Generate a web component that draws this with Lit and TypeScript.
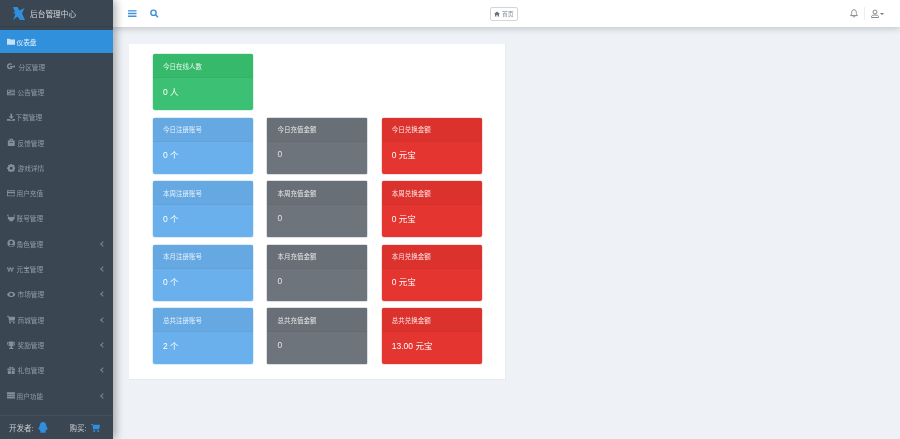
import { LitElement, html, css, svg } from 'lit';
import { customElement } from 'lit/decorators.js';

const ICONS: Record<string, unknown> = {
  dash: svg`<path d="M0 2h3l1 1h6v6H0z M3 4l2 1.500L7 4l3 2v3H0V6z"/>`,
  gplus: svg`<path d="M3.500 1.500a3.500 3.500 0 1 0 3.300 4.600V4.800H3.500v1.400h1.800A2 2 0 1 1 5 3.400l1-1A3.500 3.500 0 0 0 3.500 1.500z M8 3.800h1v1h1v1H9v1H8v-1H7v-1h1z"/>`,
  news: svg`<path fill-rule="evenodd" d="M0 2h10v6.500H0z M1 3v1.800h2V3z M4 3v.8h5V3z M4 5v.8h5V5z M1 6.500v.8h8v-.8z"/>`,
  down: svg`<path d="M4 1h2v3h2L5 7 2 4h2z M0 7h3l2 1.500L7 7h3v2H0z"/>`,
  bag: svg`<path fill-rule="evenodd" d="M1 3h8v6.500H1z M3 3V1h4v2H6V2H4v1z M3 5v1h4V5z"/>`,
  gear: svg`<path fill-rule="evenodd" d="M4 0h2l.3 1.400 1.300-.7 1.400 1.400-.7 1.300L10 4v2l-1.700.3.7 1.300-1.400 1.400-1.300-.7L6 10H4l-.3-1.700-1.300.7L1 7.600l.7-1.300L0 6V4l1.700-.6L1 2.100 2.400.7l1.300.7z M5 3.300a1.700 1.700 0 1 0 0 3.400 1.700 1.700 0 0 0 0-3.400z"/>`,
  card: svg`<path fill-rule="evenodd" d="M0 1.500h10v7H0z M1 2.500v1h8v-1z M1 5v2.500h8V5z"/>`,
  users: svg`<path d="M1 2.500l2 1h4l2-1v3L7 7.500v1H3v-1L1 5.500z M0 1h2v1H0z M8 1h2v1H8z"/>`,
  role: svg`<path fill-rule="evenodd" d="M5 .5a4.500 4.500 0 1 0 0 9 4.500 4.500 0 0 0 0-9z M5 2a2 2 0 1 1 0 4 2 2 0 0 1 0-4z M2 7.300C3 6.400 7 6.400 8 7.300A3.700 3.700 0 0 1 2 7.300z"/>`,
  won: svg`<path d="M0 2.500h1.300l.9 4 1.200-4h1.200l1.200 4 .9-4H8L6.300 8H5.100L4 4.500 2.900 8H1.700z M0 4h8v.7H0z"/>`,
  eye: svg`<path fill-rule="evenodd" d="M5 2C7.500 2 9.200 3.800 10 5.200 9.200 6.600 7.500 8.300 5 8.300S.8 6.600 0 5.200C.8 3.800 2.500 2 5 2z M5 3.200a2 2 0 1 0 0 4 2 2 0 0 0 0-4z"/>`,
  cart: svg`<path d="M0 1h2l.4 1H10L9 6.500H3.300L3.500 7.300H9v.7H2.700L1.500 2H0z"/><circle cx="3.500" cy="9" r="1"/><circle cx="8" cy="9" r="1"/>`,
  cup: svg`<path fill-rule="evenodd" d="M2.500 .5h5v1H10v1.500C10 4.500 8.800 5.500 7.200 5.700 6.800 6.300 6.200 6.500 5.800 6.600V8h1.700v1.500h-5V8h1.700V6.600C3.800 6.500 3.200 6.300 2.800 5.700 1.200 5.500 0 4.500 0 3V1.500h2.500z M1 2.500V3c0 .8.600 1.500 1.600 1.700L2.400 2.500z M9 2.500H7.600L7.400 4.700C8.400 4.500 9 3.800 9 3z"/>`,
  gift: svg`<path d="M.5 3h4v2h-4z M5.500 3h4v2h-4z M1 5.500h3.500V9.500H1z M5.500 5.500H9V9.500H5.500z M3 1c1 0 2 .8 2 2 0-1.200 1-2 2-2s1 2-2 2c-3 0-3-2-2-2z"/>`,
  list: svg`<path d="M0 1.500h10v2H0z M0 4.200h10v2H0z M0 6.900h10v2H0z"/>`,
};

const MENU = [
  { icon: 'dash', label: '仪表盘', slot: 10, active: true },
  { icon: 'gplus', label: '分区管理', slot: 12 },
  { icon: 'news', label: '公告管理', slot: 11 },
  { icon: 'down', label: '下载管理', slot: 9 },
  { icon: 'bag', label: '反馈管理', slot: 11 },
  { icon: 'gear', label: '游戏详情', slot: 11 },
  { icon: 'card', label: '用户充值', slot: 10 },
  { icon: 'users', label: '账号管理', slot: 10 },
  { icon: 'role', label: '角色管理', slot: 10, sub: true },
  { icon: 'won', label: '元宝管理', slot: 10, sub: true },
  { icon: 'eye', label: '市场管理', slot: 11, sub: true },
  { icon: 'cart', label: '商城管理', slot: 11, sub: true },
  { icon: 'cup', label: '奖励管理', slot: 11, sub: true },
  { icon: 'gift', label: '礼包管理', slot: 11, sub: true },
  { icon: 'list', label: '用户功能', slot: 10, sub: true },
];

const ROWS = [
  ['今日', '0 个', '0', '0 元宝'],
  ['本周', '0 个', '0', '0 元宝'],
  ['本月', '0 个', '0', '0 元宝'],
  ['总共', '2 个', '0', '13.00 元宝'],
];

@customElement('app-root')
export class AppRoot extends LitElement {
  static styles = css`
    :host {
      display: flex;
      width: 900px;
      height: 439px;
      overflow: hidden;
      background: #eef1f5;
      font-family: 'Liberation Sans', 'Noto Sans CJK SC', sans-serif;
      filter: blur(0.3px);
    }
    .side {
      flex: none;
      width: 113px;
      display: flex;
      flex-direction: column;
      background: #3a4652;
      box-shadow: 3px 0 8px rgba(0, 0, 0, 0.3);
      z-index: 2;
    }
    .brand {
      height: 27px;
      box-sizing: border-box;
      flex: none;
      display: flex;
      align-items: center;
      gap: 5px;
      padding-left: 12px;
      border-bottom: 1px solid #35404b;
      color: #d2d6db;
      font-size: 7.700px;
    }
    .menu {
      flex: 1;
      padding-top: 3px;
    }
    .item {
      height: 25.300px;
      display: flex;
      align-items: center;
      padding: 0 8px 0 6.500px;
      color: #949ca5;
      font-size: 6.700px;
    }
    .item:first-child {
      height: 23px;
      margin-bottom: 1px;
    }
    .item.active {
      background: #3190dc;
      color: #e4f0fa;
    }
    .item .slot {
      flex: none;
      display: flex;
    }
    .item svg {
      flex: none;
      fill: currentColor;
      opacity: 0.85;
    }
    .item .label {
      flex: 1;
    }
    .chev {
      width: 3px;
      height: 3px;
      border-left: 1px solid #7c8690;
      border-bottom: 1px solid #7c8690;
      transform: rotate(45deg);
    }
    .foot {
      height: 24px;
      box-sizing: border-box;
      flex: none;
      display: flex;
      align-items: center;
      gap: 4.500px;
      padding-left: 9px;
      border-top: 1px solid #434f5a;
      color: #c8cdd2;
      font-size: 7.500px;
    }
    .foot .buy {
      margin-left: 17px;
    }
    .foot svg {
      fill: #2f8fdc;
      flex: none;
    }
    .main {
      flex: 1;
      min-width: 0;
      display: flex;
      flex-direction: column;
    }
    .top {
      height: 27px;
      flex: none;
      display: flex;
      align-items: center;
      background: #fff;
      box-shadow: 0 1px 7px rgba(0, 0, 0, 0.22);
      padding: 0 16px 0 15px;
      z-index: 1;
    }
    .top .tools {
      display: flex;
      align-items: center;
      gap: 13.500px;
      width: 362px;
    }
    .tools svg {
      fill: #3f8fd9;
      stroke: #3f8fd9;
    }
    .tools .bars {
      stroke: none;
    }
    .tools .lens {
      fill: none;
    }
    .home {
      display: flex;
      align-items: center;
      gap: 2px;
      height: 12px;
      padding: 0 3px;
      border: 1px solid #d3d5d8;
      border-radius: 2px;
      color: #7e858c;
      font-size: 5.800px;
    }
    .home svg {
      fill: #6b727a;
    }
    .right {
      margin-left: auto;
      display: flex;
      align-items: center;
    }
    .right svg {
      fill: none;
      stroke: #858b92;
      stroke-width: 1;
    }
    .right .sep {
      width: 1px;
      height: 13px;
      background: #eceef0;
      margin: 0 6px 0 6px;
    }
    .caret {
      width: 0;
      height: 0;
      border: 2.500px solid transparent;
      border-top: 2.500px solid #6f757c;
      border-bottom: 0;
      margin-left: 1px;
    }
    .panel {
      width: 377px;
      height: 336px;
      box-sizing: border-box;
      margin: 17px 0 0 16px;
      padding: 10px 24px;
      background: #fff;
      border: 1px solid #e8ebee;
      border-width: 0 1px 1px 0;
      display: grid;
      grid-template-columns: repeat(3, 100px);
      grid-template-rows: 56.600px;
      grid-auto-rows: 56px;
      column-gap: 14.400px;
      row-gap: 7.400px;
    }
    .panel .wide {
      grid-column: 1 / -1;
      width: 100px;
      height: 56px;
    }
    .box {
      border-radius: 2px;
      display: flex;
      flex-direction: column;
      color: #fff;
      overflow: hidden;
    }
    .box .head {
      height: 23px;
      flex: none;
      display: flex;
      align-items: center;
      padding-left: 10px;
      font-size: 6.500px;
    }
    .box .body {
      flex: 1;
      display: flex;
      align-items: center;
      padding: 0 10px 7px;
      font-size: 8.500px;
    }
    .green {
      background: #3cc174;
      box-shadow: 0 0 0 0.500px #b8e6cb;
    }
    .green .head {
      background: #37b96b;
      border-bottom: 1px solid #35b268;
      color: #e6f8ed;
    }
    .blue {
      background: #69b0ec;
      box-shadow: 0 0 0 0.500px #bcdcf6;
    }
    .blue .head {
      background: #66a9e2;
      border-bottom: 1px solid #62a3dc;
      color: #e4f1fb;
    }
    .gray {
      background: #6d747b;
      box-shadow: 0 0 0 0.500px #bdc0c4;
      border-radius: 1px;
    }
    .gray .head {
      background: #686f76;
      border-bottom: 1px solid #646b72;
      color: #e6e8ea;
    }
    .gray .body {
      color: #e2e4e6;
    }
    .red {
      background: #e43531;
      box-shadow: 0 0 0 0.500px #f5c0be;
    }
    .red .head {
      background: #dc322e;
      border-bottom: 1px solid #d5302c;
      color: #fbe4e3;
    }
  `;

  private box(color: string, title: string, value: string) {
    return html`
      <div class="box ${color}">
        <div class="head">${title}</div>
        <div class="body">${value}</div>
      </div>
    `;
  }

  protected render() {
    return html`
      <aside class="side">
        <div class="brand">
          <svg width="13" height="13" viewBox="0 0 13 13" fill="#2f8fdc">
            <path d="M1 0h4.500l2 3.500L12.500 1 10 6.500 13 13H8L5.500 9.500 1 13l2.500-6L0 5.500h3z" />
          </svg>
          后台管理中心
        </div>
        <nav class="menu">
          ${MENU.map(
            (m) => html`
              <div class="item ${m.active ? 'active' : ''}">
                <span class="slot" style="width:${m.slot}px">
                  <svg width="8.500" height="8.500" viewBox="0 0 10 10">${ICONS[m.icon]}</svg>
                </span>
                <span class="label">${m.label}</span>
                ${m.sub ? html`<span class="chev"></span>` : ''}
              </div>
            `,
          )}
        </nav>
        <div class="foot">
          开发者:
          <svg width="10" height="11" viewBox="0 0 10 11">
            <path d="M5 0c2.200 0 3.300 1.800 3.300 4 .8 1.200 1.700 3 1 3.800-.3.200-.7 0-1-.5-.2 1-.6 1.500-1 2 .5.300.7.700.3 1.100C6.800 11 5.800 10.800 5 10.500 4.200 10.800 3.200 11 2.400 10.400 2 10 2.200 9.600 2.700 9.300c-.4-.500-.8-1-1-2-.3.500-.7.700-1 .5C0 7 .9 5.200 1.700 4 1.700 1.800 2.800 0 5 0z" />
          </svg>
          <span class="buy">购买:</span>
          <svg width="10" height="10" viewBox="0 0 11 11">${ICONS.cart}</svg>
        </div>
      </aside>
      <div class="main">
        <header class="top">
          <div class="tools">
            <svg class="bars" width="8.500" height="9" viewBox="0 0 9 9">
              <path d="M0 1h9v1.500H0z M0 3.800h9v1.500H0z M0 6.600h9v1.500H0z" />
            </svg>
            <svg class="lens" width="8.500" height="9" viewBox="0 0 9 9" stroke-width="1.500">
              <circle cx="3.700" cy="3.700" r="2.800" />
              <path d="M5.700 5.700L8.500 8.500" />
            </svg>
          </div>
          <div class="home">
            <svg width="6" height="6" viewBox="0 0 6 6"><path d="M3 .5L6 3H5v2.500H3.600V4H2.400v1.500H1V3H0z" /></svg>
            首页
          </div>
          <div class="right">
            <svg width="8" height="9" viewBox="0 0 8 9">
              <path d="M4 .8c1.500 0 2.300 1 2.300 2.500 0 2 .6 2.700 1.200 3.300H.5C1.100 6 1.700 5.300 1.700 3.300 1.700 1.800 2.500.8 4 .8z M3 7.200c0 1.100 2 1.100 2 0" />
            </svg>
            <span class="sep"></span>
            <svg width="8" height="9" viewBox="0 0 8 9">
              <circle cx="4" cy="3" r="2" />
              <path d="M.5 8.500V7.500C.5 6.500 2 6 4 6s3.500.5 3.500 1.500v1z" />
            </svg>
            <span class="caret"></span>
          </div>
        </header>
        <main>
          <section class="panel">
            <div class="wide box green">
              <div class="head">今日在线人数</div>
              <div class="body">0 人</div>
            </div>
            ${ROWS.map(
              ([when, reg, pay, swap]) => html`
                ${this.box('blue', `${when}注册账号`, reg)}
                ${this.box('gray', `${when}充值金额`, pay)}
                ${this.box('red', `${when}兑换金额`, swap)}
              `,
            )}
          </section>
        </main>
      </div>
    `;
  }
}
